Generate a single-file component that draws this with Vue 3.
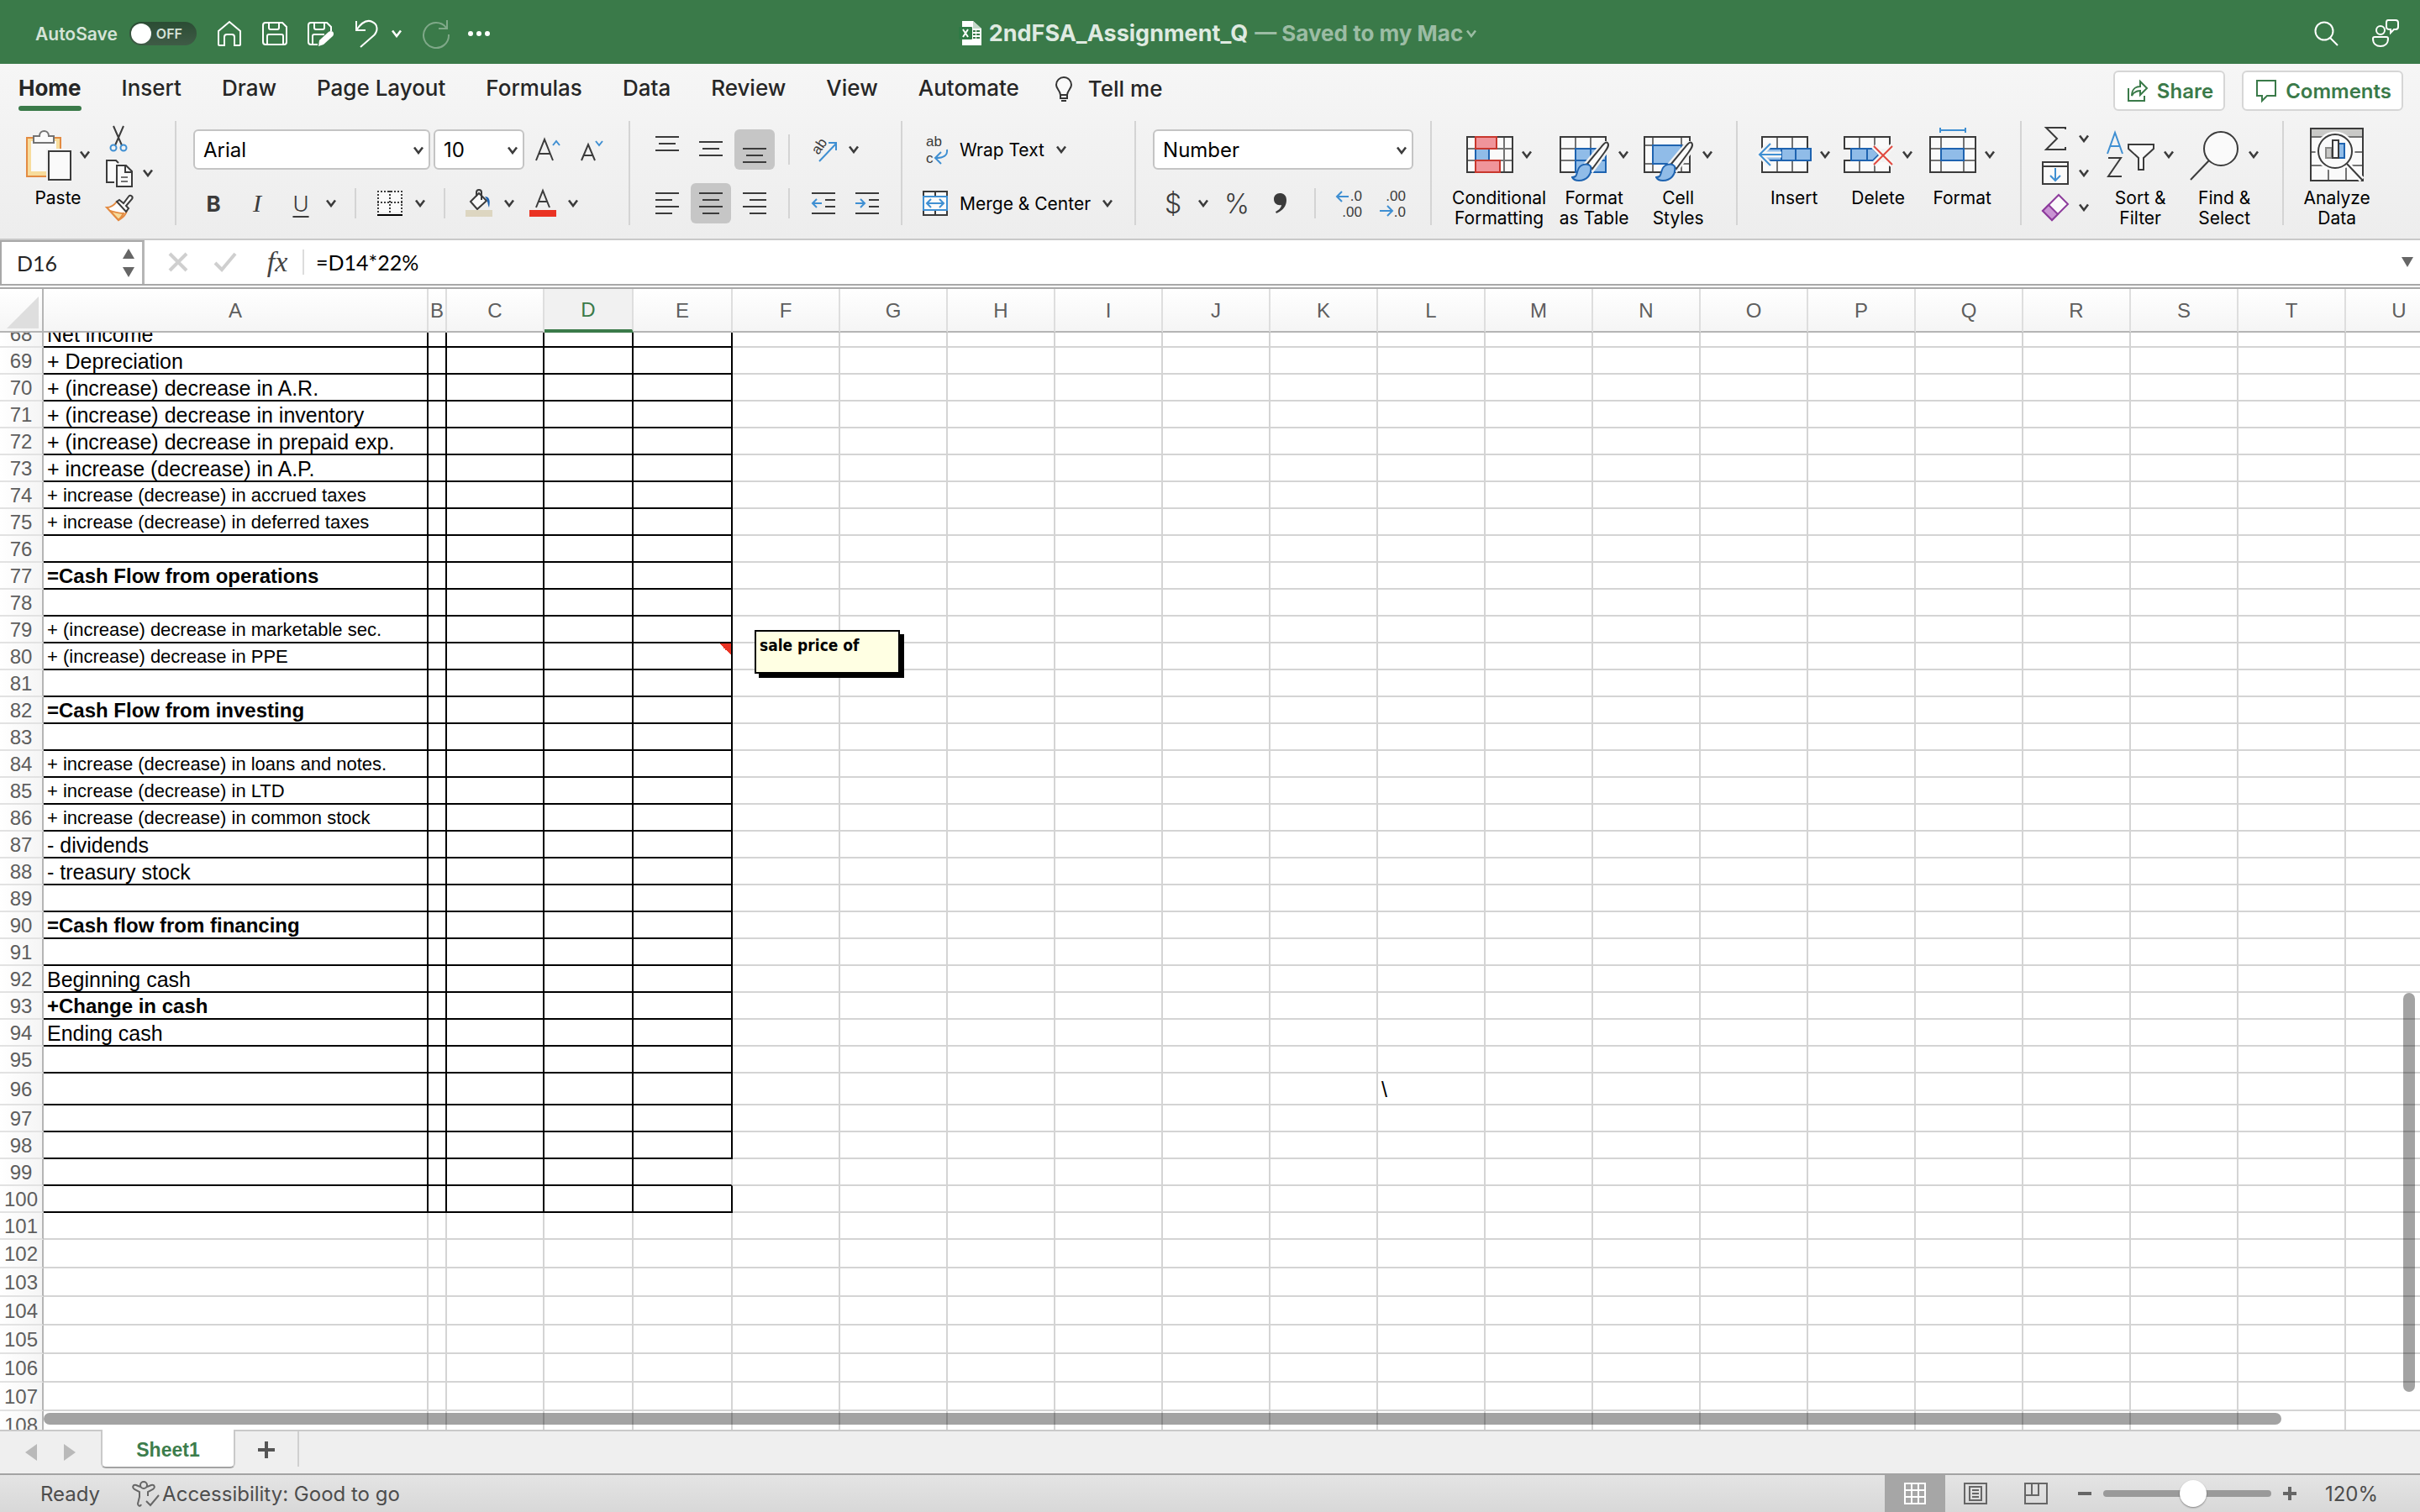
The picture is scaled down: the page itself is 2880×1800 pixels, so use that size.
<script setup>
import { ref, computed } from 'vue'

const fileName = ref('2ndFSA_Assignment_Q')
const autoSave = ref(false)
const activeTab = ref('Home')
const tabs = ['Home', 'Insert', 'Draw', 'Page Layout', 'Formulas', 'Data', 'Review', 'View', 'Automate']

const fontName = ref('Arial')
const fontSize = ref('10')
const numberFormat = ref('Number')
const nameBox = ref('D16')
const formula = ref('=D14*22%')
const zoom = ref(120)

// Column widths include the 2px grid line on the right
const columns = [
  { id: 'A', width: 458 },
  { id: 'B', width: 22 },
  { id: 'C', width: 116 },
  { id: 'D', width: 106 },
  { id: 'E', width: 118 },
  ...'FGHIJKLMNOPQRSTU'.split('').map((id) => ({ id, width: 128 }))
]

const labels = {
  68: { text: 'Net income' },
  69: { text: '+ Depreciation' },
  70: { text: '+ (increase) decrease in A.R.' },
  71: { text: '+ (increase) decrease in inventory' },
  72: { text: '+ (increase) decrease in prepaid exp.' },
  73: { text: '+ increase (decrease) in A.P.' },
  74: { text: '+ increase (decrease) in accrued taxes', small: true },
  75: { text: '+ increase (decrease) in deferred taxes', small: true },
  77: { text: '=Cash Flow from operations', bold: true },
  79: { text: '+ (increase) decrease in marketable sec.', small: true },
  80: { text: '+ (increase) decrease in PPE', small: true },
  82: { text: '=Cash Flow from investing', bold: true },
  84: { text: '+ increase (decrease) in loans and notes.', small: true },
  85: { text: '+ increase (decrease) in LTD', small: true },
  86: { text: '+ increase (decrease) in common stock', small: true },
  87: { text: '- dividends' },
  88: { text: '- treasury stock' },
  90: { text: '=Cash flow from financing', bold: true },
  92: { text: 'Beginning cash' },
  93: { text: '+Change in cash', bold: true },
  94: { text: 'Ending cash' }
}

const rowHeight = (n) => {
  if (n === 68) return 18 // partly scrolled under the header
  if (n === 96) return 38
  return n > 101 ? 34 : 32
}

const rows = computed(() => {
  const list = []
  for (let n = 68; n <= 108; n++) {
    list.push({ n, height: rowHeight(n), label: labels[n] || {} })
  }
  return list
})

const cellText = (row, col) => {
  if (col === 'A') return row.label.text
  if (col === 'L' && row.n === 96) return '\\'
  return ''
}

const cellClass = (row, col) => {
  const inked = row.n <= 100 && 'ABCDE'.includes(col)
  return {
    'ink-bottom': inked,
    'ink-right': inked && !(col === 'E' && row.n === 99),
    bold: col === 'A' && row.label.bold,
    small: col === 'A' && row.label.small,
    noted: col === 'E' && row.n === 80
  }
}
</script>

<template>
  <div class="app">
    <svg class="defs" aria-hidden="true">
      <symbol id="chev" viewBox="0 0 12 10">
        <path d="M1 1.5 6 8l5-6.5" fill="none" stroke="currentColor" stroke-width="2.6" />
      </symbol>
      <symbol id="brush" viewBox="0 0 46 50">
        <path d="M43 2c3 3-1 8-4 12L25 33l-6-6L34 9c3-4 7-9 9-7z" fill="#fafafa" stroke="#f2f2f2" stroke-width="7" />
        <path d="M43 2c3 3-1 8-4 12L25 33l-6-6L34 9c3-4 7-9 9-7z" fill="#fafafa" stroke="#3b3b3b" stroke-width="2" />
        <path d="M23 30c2 10-5 17-14 17-4 0-7-2-8-4 6 0 5-4 7-9 2-6 11-9 15-4z" fill="#90bce8" stroke="#1e63b0" stroke-width="2" />
      </symbol>
    </svg>

    <header class="titlebar">
      <div class="quick">
        <label class="autosave">
          <span class="autosave-text">AutoSave</span>
          <input v-model="autoSave" type="checkbox" />
          <span class="toggle"><i class="knob"></i>OFF</span>
        </label>
        <button type="button" aria-label="Home">
          <svg width="30" height="32" viewBox="0 0 30 32"><path d="M2 29V13L15 2l13 11v16a1 1 0 0 1-1 1h-6V20q0-3-3-3h-6q-3 0-3 3v10H3a1 1 0 0 1-1-1z" /></svg>
        </button>
        <button type="button" aria-label="Save">
          <svg width="30" height="32" viewBox="0 0 30 32"><path d="M4 3h20l5 5v18a3 3 0 0 1-3 3H4a3 3 0 0 1-3-3V6a3 3 0 0 1 3-3zM8 3v6q0 2 2 2h8q2 0 2-2V3M6 29V19q0-2 2-2h15q2 0 2 2v10" /></svg>
        </button>
        <button type="button" aria-label="Save as">
          <svg width="32" height="32" viewBox="0 0 32 32"><path d="M12 29H4a3 3 0 0 1-3-3V6a3 3 0 0 1 3-3h19l5 5v5M8 3v6q0 2 2 2h8q2 0 2-2V3M6 29V19q0-2 2-2h12" /><path d="m13 31 1-7 11-10c4-3 8 1 5 5L19 29z" fill="#fff" stroke="none" /></svg>
        </button>
        <span class="split-quick">
          <button type="button" aria-label="Undo">
            <svg width="30" height="34" viewBox="0 0 30 34"><path d="M2 2v11h11M2 13C8 4 15 0 21 3c7 3 7 11 2 16L7 33" /></svg>
          </button>
          <button type="button" aria-label="Undo history"><svg class="chev"><use href="#chev" /></svg></button>
        </span>
        <button type="button" class="dim" aria-label="Redo">
          <svg width="34" height="34" viewBox="0 0 34 34"><path d="M30 1v10H20M29 10A15 15 0 1 0 32 18" /></svg>
        </button>
        <button type="button" class="more" aria-label="More">
          <svg width="28" height="8" viewBox="0 0 28 8"><g fill="#fff" stroke="none"><circle cx="4" cy="4" r="3" /><circle cx="14" cy="4" r="3" /><circle cx="24" cy="4" r="3" /></g></svg>
        </button>
      </div>
      <h1 class="doc">
        <svg width="28" height="30" viewBox="0 0 28 30">
          <path d="M4 0h13l10 9v20H4z" fill="#fff" />
          <path d="M17 0v9h10z" fill="#c4d8c9" />
          <rect x="0" y="7" width="16" height="15" rx="1" fill="#2f7a45" />
          <path d="m5 10 6 9m0-9-6 9" stroke="#fff" stroke-width="2" fill="none" />
          <path d="M17 11h3v2h-3zm4 0h4v2h-4zm-4 4h3v2h-3zm4 0h4v2h-4zm-4 4h3v2h-3zm4 0h4v2h-4z" fill="#3a7a49" />
        </svg>
        <span class="doc-name">{{ fileName }}</span>
        <span class="doc-state">— Saved to my Mac <svg class="chev"><use href="#chev" /></svg></span>
      </h1>
      <div class="tools">
        <button type="button" aria-label="Search">
          <svg width="30" height="30" viewBox="0 0 30 30"><circle cx="12" cy="12" r="10.5" /><path d="m19 20 9 9" /></svg>
        </button>
        <button type="button" aria-label="Presence">
          <svg width="34" height="34" viewBox="0 0 34 34"><circle cx="11" cy="13" r="5" /><path d="M2 23q0-2 2-2h14q2 0 2 2c0 6-4 9-9 9s-9-3-9-9zM20 1h9q3 0 3 3v5q0 3-3 3h-2l-4 4v-4h-1q-4 0-4-3V4q0-3 2-3z" /></svg>
        </button>
      </div>
    </header>

    <section class="ribbon">
      <nav class="tabs">
        <button
          v-for="tab in tabs"
          :key="tab"
          type="button"
          class="tab"
          :class="{ active: tab === activeTab }"
          @click="activeTab = tab"
        >{{ tab }}</button>
        <button type="button" class="tab tell">
          <svg width="22" height="32" viewBox="0 0 22 32"><path d="M7 23c0-5-5-7-5-12a9 9 0 0 1 18 0c0 5-5 7-5 12zM7 23v4h8v-4" fill="#fafafa" stroke="#333" stroke-width="2" /><path d="M8 30h6" stroke="#333" stroke-width="2" /></svg>
          Tell me
        </button>
        <span class="spacer"></span>
        <button type="button" class="pill">
          <svg width="26" height="28" viewBox="0 0 26 28"><path d="M2 11v15h19v-6M6 20c0-7 4-11 10-11V3l8 8-8 8v-5c-5 0-8 2-10 6z" /></svg>
          Share
        </button>
        <button type="button" class="pill">
          <svg width="26" height="28" viewBox="0 0 26 28"><path d="M2 2h22v18H14l-6 6v-6H2z" /></svg>
          Comments
        </button>
      </nav>

      <div class="groups">
        <div class="group wide clipboard">
          <button type="button" class="big">
            <span class="pic">
              <svg width="54" height="64" viewBox="0 0 54 64">
                <path d="M1 12h40v46H1z" fill="#f7dc9c" stroke="#e38b42" stroke-width="2" />
                <path d="M6 16h30v36H6z" fill="#fafafa" />
                <path d="M9 10h7c0-8 11-8 11 0h6v8H9z" fill="#fafafa" stroke="#737373" stroke-width="2" />
                <path d="M24 25h30v39H24z" fill="#f2f2f2" />
                <path d="M27 28h26v34H27z" fill="#fafafa" stroke="#3b3b3b" stroke-width="2" />
              </svg>
              <svg class="chev"><use href="#chev" /></svg>
            </span>
            <span>Paste</span>
          </button>
          <div class="stack">
            <button type="button" aria-label="Cut">
              <svg width="32" height="34" viewBox="0 0 32 34"><path d="M9 2l10 23M21 2 11 25" stroke="#3b3b3b" stroke-width="2" fill="none" /><g fill="none" stroke="#3f8fd2" stroke-width="2"><circle cx="9" cy="28" r="3.5" /><circle cx="21" cy="28" r="3.5" /></g></svg>
            </button>
            <button type="button" aria-label="Copy">
              <svg width="32" height="34" viewBox="0 0 32 34"><g fill="#fafafa" stroke="#3b3b3b" stroke-width="2"><path d="M10 28H1V2h11l3 3" /><path d="M13 8h11l7 7v18H13z" /><path d="M23 8v8h8" fill="none" /><path d="M18 22h8M18 27h8" stroke="#737373" /></g></svg>
              <svg class="chev"><use href="#chev" /></svg>
            </button>
            <button type="button" aria-label="Format painter">
              <svg width="32" height="32" viewBox="0 0 32 32"><path d="M1 16c5 0 9-3 12-7l12 11c-2 6-6 9-10 11z" fill="#fff" stroke="#e38b42" stroke-width="2" /><path d="M5 20c4 1 10 3 16 3-2 4-4 6-6 8z" fill="#f7dc9c" stroke="#e38b42" stroke-width="2" /><path d="m13 9 3-2 5 4 6-8c2-3 6 0 4 3l-7 8 3 3-3 4z" fill="#fafafa" stroke="#3b3b3b" stroke-width="2" /></svg>
            </button>
          </div>
        </div>

        <div class="group lines">
          <div class="line">
            <span class="select font-name">
              <select v-model="fontName" aria-label="Font"><option>Arial</option><option>Calibri</option></select>
              <svg class="chev"><use href="#chev" /></svg>
            </span>
            <span class="select font-size">
              <select v-model="fontSize" aria-label="Font size"><option>9</option><option>10</option><option>12</option></select>
              <svg class="chev"><use href="#chev" /></svg>
            </span>
            <button type="button" class="ic" aria-label="Increase font size">
              <svg width="32" height="30" viewBox="0 0 32 30"><path d="M2 28 12 3l10 25M5 20h14" stroke="#3b3b3b" stroke-width="2" fill="none" /><path d="m22 10 4-5 4 5" stroke="#3f8fd2" stroke-width="2" fill="none" /></svg>
            </button>
            <button type="button" class="ic" aria-label="Decrease font size">
              <svg width="32" height="30" viewBox="0 0 32 30"><path d="M4 28 12 9l8 19M7 22h10" stroke="#3b3b3b" stroke-width="2" fill="none" /><path d="m21 5 4 5 4-5" stroke="#3f8fd2" stroke-width="2" fill="none" /></svg>
            </button>
          </div>
          <div class="line">
            <button type="button" class="ic glyph b">B</button>
            <button type="button" class="ic glyph i">I</button>
            <span class="split">
              <button type="button" class="ic glyph u">U</button>
              <button type="button" class="drop" aria-label="Underline style"><svg class="chev"><use href="#chev" /></svg></button>
            </span>
            <i class="sep"></i>
            <span class="split">
              <button type="button" class="ic" aria-label="Borders">
                <svg width="30" height="32" viewBox="0 0 30 32"><path d="M1 1h28v26H1z" fill="#fafafa" /><path d="M0 2h30M1 1v26M29 1v26M15 1v26M0 15h30" stroke="#3b3b3b" stroke-width="2" stroke-dasharray="2 2" fill="none" /><path d="M0 30h30" stroke="#000" stroke-width="2" /></svg>
              </button>
              <button type="button" class="drop" aria-label="Border style"><svg class="chev"><use href="#chev" /></svg></button>
            </span>
            <i class="sep"></i>
            <span class="split">
              <button type="button" class="ic" aria-label="Fill color">
                <svg width="32" height="34" viewBox="0 0 32 34"><path d="M6 15 16 5l9 9-11 10z" fill="#fafafa" stroke="#3b3b3b" stroke-width="2" /><path d="M13 9V4c0-4 6-4 6 0v9" fill="none" stroke="#3b3b3b" stroke-width="2" /><path d="M23 9c5 0 7 4 5 13-2-4-1-8-5-13z" fill="#1e63b0" /><path d="M0 25h32v8H0z" fill="#ddd6c1" /></svg>
              </button>
              <button type="button" class="drop" aria-label="Fill colors"><svg class="chev"><use href="#chev" /></svg></button>
            </span>
            <span class="split">
              <button type="button" class="ic" aria-label="Font color">
                <svg width="32" height="34" viewBox="0 0 32 34"><path d="m8 22 8-20 8 20M11 15h10" stroke="#3b3b3b" stroke-width="2" fill="none" /><path d="M0 25h32v8H0z" fill="#ea3323" /></svg>
              </button>
              <button type="button" class="drop" aria-label="Font colors"><svg class="chev"><use href="#chev" /></svg></button>
            </span>
          </div>
        </div>

        <div class="group lines align">
          <div class="line">
            <button type="button" class="ic" aria-label="Top align">
              <svg width="28" height="32" viewBox="0 0 28 32"><path d="M0 1h28M4 9h20M0 17h28" class="bar" /></svg>
            </button>
            <button type="button" class="ic" aria-label="Middle align">
              <svg width="28" height="32" viewBox="0 0 28 32"><path d="M0 7h28M4 15h20M0 23h28" class="bar" /></svg>
            </button>
            <button type="button" class="ic on" aria-label="Bottom align">
              <svg width="28" height="32" viewBox="0 0 28 32"><path d="M0 15h28M4 23h20M0 31h28" class="bar" /></svg>
            </button>
            <i class="sep"></i>
            <span class="split">
              <button type="button" class="ic" aria-label="Orientation">
                <svg width="34" height="34" viewBox="0 0 34 34"><text x="0" y="0" transform="translate(11 24) rotate(-55)" class="mini">ab</text><path d="m12 31 20-21M23 9h9v9" stroke="#3f8fd2" stroke-width="2" fill="none" /></svg>
              </button>
              <button type="button" class="drop" aria-label="Orientation options"><svg class="chev"><use href="#chev" /></svg></button>
            </span>
          </div>
          <div class="line">
            <button type="button" class="ic" aria-label="Align left">
              <svg width="28" height="28" viewBox="0 0 28 28"><path d="M0 2h28M0 10h20M0 18h28M0 26h20" class="bar" /></svg>
            </button>
            <button type="button" class="ic on" aria-label="Center">
              <svg width="28" height="28" viewBox="0 0 28 28"><path d="M0 2h28M4 10h20M0 18h28M4 26h20" class="bar" /></svg>
            </button>
            <button type="button" class="ic" aria-label="Align right">
              <svg width="28" height="28" viewBox="0 0 28 28"><path d="M0 2h28M8 10h20M0 18h28M8 26h20" class="bar" /></svg>
            </button>
            <i class="sep"></i>
            <button type="button" class="ic" aria-label="Decrease indent">
              <svg width="28" height="28" viewBox="0 0 28 28"><path d="M0 2h28M16 10h12M16 18h12M0 26h28" class="bar" /><path d="M12 14H1m5-5-5 5 5 5" stroke="#3f8fd2" stroke-width="2" fill="none" /></svg>
            </button>
            <button type="button" class="ic" aria-label="Increase indent">
              <svg width="28" height="28" viewBox="0 0 28 28"><path d="M0 2h28M16 10h12M16 18h12M0 26h28" class="bar" /><path d="M0 14h11m-5-5 5 5-5 5" stroke="#3f8fd2" stroke-width="2" fill="none" /></svg>
            </button>
          </div>
        </div>

        <div class="group lines wraps">
          <div class="line">
            <button type="button" class="labelled">
              <svg width="30" height="36" viewBox="0 0 30 36"><text x="4" y="14" class="mini">ab</text><text x="4" y="34" class="mini">c</text><path d="M29 18c1 7-4 10-13 10m6-7-7 7 7 7" stroke="#3f8fd2" stroke-width="2" fill="none" /></svg>
              Wrap Text
              <svg class="chev"><use href="#chev" /></svg>
            </button>
          </div>
          <div class="line">
            <button type="button" class="labelled">
              <svg width="30" height="32" viewBox="0 0 30 32"><path d="M1 2h28v28H1z" fill="#fafafa" stroke="#3b3b3b" stroke-width="2" /><path d="M15 2v6M15 24v6" stroke="#3b3b3b" stroke-width="2" /><path d="M1 8h28v16H1z" fill="#fafafa" stroke="#3f8fd2" stroke-width="2" /><path d="M6 16h18m-14-5-5 5 5 5m10-10 5 5-5 5" fill="none" stroke="#3f8fd2" stroke-width="2" /></svg>
              Merge &amp; Center
              <svg class="chev"><use href="#chev" /></svg>
            </button>
          </div>
        </div>

        <div class="group lines">
          <div class="line">
            <span class="select number">
              <select v-model="numberFormat" aria-label="Number format"><option>Number</option><option>General</option></select>
              <svg class="chev"><use href="#chev" /></svg>
            </span>
          </div>
          <div class="line">
            <span class="split">
              <button type="button" class="ic glyph sign">$</button>
              <button type="button" class="drop" aria-label="Currency"><svg class="chev"><use href="#chev" /></svg></button>
            </span>
            <button type="button" class="ic glyph sign">%</button>
            <button type="button" class="ic" aria-label="Comma style">
              <svg width="16" height="28" viewBox="0 0 16 28"><path d="M7 2c5 0 8 3 8 8 0 8-5 13-12 16l-1-2c4-2 7-5 7-8-5 1-9-2-9-7 0-4 3-7 7-7z" fill="#3b3b3b" /></svg>
            </button>
            <i class="sep"></i>
            <button type="button" class="ic" aria-label="Increase decimal">
              <svg width="32" height="36" viewBox="0 0 32 36"><text x="31" y="15" text-anchor="end" class="mini">.0</text><text x="31" y="34" text-anchor="end" class="mini">.00</text><path d="M15 10H1m6-6-6 6 6 6" stroke="#3f8fd2" stroke-width="2" fill="none" /></svg>
            </button>
            <button type="button" class="ic" aria-label="Decrease decimal">
              <svg width="32" height="36" viewBox="0 0 32 36"><text x="31" y="15" text-anchor="end" class="mini">.00</text><text x="31" y="34" text-anchor="end" class="mini">.0</text><path d="M0 27h15m-6-6 6 6-6 6" stroke="#3f8fd2" stroke-width="2" fill="none" /></svg>
            </button>
          </div>
        </div>

        <div class="group wide">
          <button type="button" class="big">
            <span class="pic">
              <svg width="56" height="64" viewBox="0 0 56 64">
                <path d="M1 11h54v42H1z" fill="#fafafa" />
                <path d="M1 25h54M1 39h54M45 11v42M11 11v42" stroke="#737373" stroke-width="2" />
                <path d="M1 11h54v42H1z" fill="none" stroke="#3b3b3b" stroke-width="2" />
                <path d="M29 26h15v12H29z" fill="#fafafa" />
                <path d="M11 25h16v14H11z" fill="#90bce8" stroke="#1e63b0" stroke-width="2" />
                <path d="M11 11h25v14H11zM11 39h29v14H11z" fill="#f0949a" stroke="#c8372d" stroke-width="2" />
              </svg>
              <svg class="chev"><use href="#chev" /></svg>
            </span>
            <span>Conditional<br />Formatting</span>
          </button>
          <button type="button" class="big">
            <span class="pic">
              <svg width="60" height="64" viewBox="0 0 60 64">
                <path d="M1 11h54v42H1z" fill="#fafafa" stroke="#3b3b3b" stroke-width="2" />
                <path d="M2 25h17M2 39h17M19 12v13M37 12v13" stroke="#737373" stroke-width="2" />
                <path d="M19 25h36v28H19zM37 25v28M19 39h36" fill="#90bce8" stroke="#1e63b0" stroke-width="2" />
                <use href="#brush" x="14" y="16" width="46" height="50" />
              </svg>
              <svg class="chev"><use href="#chev" /></svg>
            </span>
            <span>Format<br />as Table</span>
          </button>
          <button type="button" class="big">
            <span class="pic">
              <svg width="60" height="64" viewBox="0 0 60 64">
                <path d="M1 11h54v42H1z" fill="#fafafa" stroke="#3b3b3b" stroke-width="2" />
                <path d="M2 21h52M2 43h52M11 12v40M45 12v40" stroke="#737373" stroke-width="2" />
                <path d="M11 21h34v22H11z" fill="#90bce8" stroke="#1e63b0" stroke-width="2" />
                <use href="#brush" x="14" y="16" width="46" height="50" />
              </svg>
              <svg class="chev"><use href="#chev" /></svg>
            </span>
            <span>Cell<br />Styles</span>
          </button>
        </div>

        <div class="group wide">
          <button type="button" class="big">
            <span class="pic">
              <svg width="64" height="64" viewBox="0 0 64 64">
                <path d="M5 11h54v42H5z" fill="#fafafa" stroke="#3b3b3b" stroke-width="2" />
                <path d="M23 12v40M41 12v40" stroke="#737373" stroke-width="2" />
                <path d="M10 25h53v14H10zM28 25v14M45 25v14" fill="#90bce8" stroke="#1e63b0" stroke-width="2" />
                <path d="M28 32H3m12-13L2 32l13 13" fill="none" stroke="#f5f5f5" stroke-width="7" />
                <path d="M28 32H2m13-13L2 32l13 13" fill="none" stroke="#3f8fd2" stroke-width="2" />
              </svg>
              <svg class="chev"><use href="#chev" /></svg>
            </span>
            <span>Insert</span>
          </button>
          <button type="button" class="big">
            <span class="pic">
              <svg width="60" height="64" viewBox="0 0 60 64">
                <path d="M9 25H1V11h54v14M9 39H1v14h54V41" fill="#fafafa" stroke="#3b3b3b" stroke-width="2" />
                <path d="M19 12v13M37 12v13M19 39v13M37 39v13" stroke="#737373" stroke-width="2" />
                <path d="M9 25h26l7 7-7 7H9zM28 25v14" fill="#90bce8" stroke="#1e63b0" stroke-width="2" />
                <path d="m36 22 22 22M58 22 36 44" fill="none" stroke="#f5f5f5" stroke-width="7" />
                <path d="m36 22 22 22M58 22 36 44" fill="none" stroke="#e0483e" stroke-width="2" />
              </svg>
              <svg class="chev"><use href="#chev" /></svg>
            </span>
            <span>Delete</span>
          </button>
          <button type="button" class="big">
            <span class="pic">
              <svg width="56" height="64" viewBox="0 0 56 64">
                <path d="M1 11h54v42H1z" fill="#fafafa" />
                <path d="M1 25h54M1 39h54M14 11v42M41 11v42" stroke="#737373" stroke-width="2" />
                <path d="M1 11h54v42H1z" fill="none" stroke="#3b3b3b" stroke-width="2" />
                <path d="M14 25h27v14H14z" fill="#90bce8" stroke="#1e63b0" stroke-width="2" />
                <path d="M13 3h30M13 0v6M43 0v6" stroke="#3f8fd2" stroke-width="2" />
              </svg>
              <svg class="chev"><use href="#chev" /></svg>
            </span>
            <span>Format</span>
          </button>
        </div>

        <div class="group wide">
          <div class="stack">
            <button type="button" aria-label="AutoSum">
              <svg width="32" height="30" viewBox="0 0 32 30"><path d="M28 4V2H5l13 13L5 28h23v-3" fill="none" stroke="#3b3b3b" stroke-width="2" /></svg>
              <svg class="chev"><use href="#chev" /></svg>
            </button>
            <button type="button" aria-label="Fill">
              <svg width="32" height="30" viewBox="0 0 32 30"><path d="M1 2h30v26H1zM1 7h30" fill="#fafafa" stroke="#3b3b3b" stroke-width="2" /><path d="M16 9v15m-6-6 6 6 6-6" fill="none" stroke="#3f8fd2" stroke-width="2" /></svg>
              <svg class="chev"><use href="#chev" /></svg>
            </button>
            <button type="button" aria-label="Clear">
              <svg width="32" height="34" viewBox="0 0 32 34"><path d="M20 2 31 13 12 32 1 21z" fill="#fafafa" stroke="#8d3c9c" stroke-width="2" /><path d="m8 14 11 11-7 7L1 21z" fill="#c993d3" stroke="#8d3c9c" stroke-width="2" /></svg>
              <svg class="chev"><use href="#chev" /></svg>
            </button>
          </div>
          <button type="button" class="big">
            <span class="pic">
              <svg width="58" height="64" viewBox="0 0 58 64">
                <path d="m1 31 9-25 9 25M4 22h12" fill="none" stroke="#3f8fd2" stroke-width="2" />
                <path d="M2 36h15L2 58h16" fill="none" stroke="#3b3b3b" stroke-width="2" />
                <path d="M26 20h30v5L44 36v14h-6V36L26 25z" fill="#fafafa" stroke="#3b3b3b" stroke-width="2" />
              </svg>
              <svg class="chev"><use href="#chev" /></svg>
            </span>
            <span>Sort &amp;<br />Filter</span>
          </button>
          <button type="button" class="big">
            <span class="pic">
              <svg width="60" height="64" viewBox="0 0 60 64">
                <circle cx="37" cy="25" r="20" fill="#fafafa" stroke="#3b3b3b" stroke-width="2" />
                <path d="M23 39 1 62" stroke="#3b3b3b" stroke-width="2" />
              </svg>
              <svg class="chev"><use href="#chev" /></svg>
            </span>
            <span>Find &amp;<br />Select</span>
          </button>
        </div>

        <div class="group wide last">
          <button type="button" class="big">
            <span class="pic">
              <svg width="64" height="64" viewBox="0 0 64 64">
                <path d="M1 1h62v62H1z" fill="#fafafa" />
                <path d="M1 1h62v10H1z" fill="#c9c9c7" />
                <path d="M1 11h62M1 29h62M1 45h62M22 45v18M43 45v18" stroke="#737373" stroke-width="2" />
                <path d="M1 1h62v62H1z" fill="none" stroke="#3b3b3b" stroke-width="2" />
                <circle cx="30" cy="28" r="20" fill="#fafafa" stroke="#fafafa" stroke-width="7" />
                <path d="m44 43 18 19" stroke="#fafafa" stroke-width="7" />
                <path d="M19 24h7v12h-7z" fill="#c9c9c7" stroke="#8a8a88" stroke-width="2" />
                <path d="M34 19h7v17h-7z" fill="#90bce8" stroke="#1e63b0" stroke-width="2" />
                <path d="M27 15h7v21h-7z" fill="#fafafa" stroke="#3b3b3b" stroke-width="2" />
                <circle cx="30" cy="28" r="20" fill="none" stroke="#3b3b3b" stroke-width="2" />
                <path d="m44 43 19 20" stroke="#3b3b3b" stroke-width="2" />
              </svg>
            </span>
            <span>Analyze<br />Data</span>
          </button>
        </div>
      </div>
    </section>

    <section class="formula-bar">
      <div class="name-box">
        <input v-model="nameBox" type="text" aria-label="Name box" />
        <span class="steps">
          <svg width="14" height="12" viewBox="0 0 14 12"><path d="M7 0l7 12H0z" /></svg>
          <svg width="14" height="12" viewBox="0 0 14 12"><path d="M7 12 0 0h14z" /></svg>
        </span>
      </div>
      <button type="button" aria-label="Cancel"><svg width="28" height="24" viewBox="0 0 28 24"><path d="m4 2 20 20M24 2 4 22" stroke="#cfcfcf" stroke-width="4" fill="none" /></svg></button>
      <button type="button" aria-label="Enter"><svg width="28" height="24" viewBox="0 0 28 24"><path d="m2 13 8 8L26 2" stroke="#cfcfcf" stroke-width="4" fill="none" /></svg></button>
      <button type="button" class="fx">fx</button>
      <input v-model="formula" class="formula" type="text" aria-label="Formula" />
      <svg class="expand" width="14" height="12" viewBox="0 0 14 12"><path d="M7 12 0 0h14z" /></svg>
    </section>

    <main class="sheet">
      <table>
        <colgroup>
          <col class="row-col" />
          <col v-for="col in columns" :key="col.id" :style="{ width: col.width + 'px' }" />
        </colgroup>
        <thead>
          <tr>
            <th class="corner"><svg width="38" height="38" viewBox="0 0 38 38"><path d="M38 0v38H0z" fill="#dedede" /></svg></th>
            <th v-for="col in columns" :key="col.id" :class="{ current: col.id === 'D' }">{{ col.id }}</th>
          </tr>
        </thead>
        <tbody>
          <tr v-for="row in rows" :key="row.n" :style="{ height: row.height + 'px' }">
            <th><div class="clip" :style="{ height: row.height - 2 + 'px' }"><span>{{ row.n }}</span></div></th>
            <td v-for="col in columns" :key="col.id" :class="cellClass(row, col.id)">
              <div v-if="cellText(row, col.id)" class="clip" :style="{ height: row.height - 2 + 'px' }"><span>{{ cellText(row, col.id) }}</span></div>
              <aside v-if="col.id === 'E' && row.n === 80" class="note">sale price of</aside>
            </td>
          </tr>
        </tbody>
      </table>
      <div class="scroll-x"></div>
      <div class="scroll-y"></div>
    </main>

    <nav class="sheet-tabs">
      <button type="button" aria-label="Previous sheet"><svg width="14" height="20" viewBox="0 0 14 20"><path d="M14 0v20L0 10z" fill="#b9b9b9" /></svg></button>
      <button type="button" aria-label="Next sheet"><svg width="14" height="20" viewBox="0 0 14 20"><path d="M0 0v20l14-10z" fill="#b9b9b9" /></svg></button>
      <button type="button" class="sheet-tab">Sheet1</button>
      <button type="button" class="add" aria-label="Add sheet"><svg width="20" height="20" viewBox="0 0 20 20"><path d="M10 0v20M0 10h20" stroke="#555" stroke-width="4" /></svg></button>
    </nav>

    <footer class="status">
      <span class="ready">Ready</span>
      <button type="button" class="access">
        <svg width="34" height="32" viewBox="0 0 34 32"><g fill="none" stroke="#666" stroke-width="2"><circle cx="14" cy="6" r="4" /><path d="M10 8 5 6C1 5 0 9 3 11l6 3v6L7 28c0 3 3 4 4 1M18 8l5-2c4-1 5 3 2 5l-6 3v5M17 25l5 5 10-12" /></g></svg>
        Accessibility: Good to go
      </button>
      <span class="spacer"></span>
      <button type="button" class="view on" aria-label="Normal view">
        <svg width="28" height="28" viewBox="0 0 28 28"><path d="M2 2h24v24H2zM10 2v24M18 2v24M2 10h24M2 18h24" fill="none" stroke="#fff" stroke-width="2" /></svg>
      </button>
      <button type="button" class="view" aria-label="Page layout view">
        <svg width="28" height="28" viewBox="0 0 28 28"><path d="M1 2h26v24H1zM7 6h14v16H7zM10 10h8M10 14h8M10 18h8" fill="none" stroke="#666" stroke-width="2" /></svg>
      </button>
      <button type="button" class="view" aria-label="Page break preview">
        <svg width="28" height="28" viewBox="0 0 28 28"><path d="M1 2h26v24H1zM1 16h16V2M9 2v14" fill="none" stroke="#666" stroke-width="2" /></svg>
      </button>
      <button type="button" class="step" aria-label="Zoom out" @click="zoom -= 10"><svg width="16" height="16" viewBox="0 0 16 16"><path d="M0 8h16" stroke="#666" stroke-width="4" /></svg></button>
      <input v-model.number="zoom" type="range" min="12" max="212" aria-label="Zoom" />
      <button type="button" class="step" aria-label="Zoom in" @click="zoom += 10"><svg width="16" height="16" viewBox="0 0 16 16"><path d="M0 8h16M8 0v16" stroke="#666" stroke-width="4" /></svg></button>
      <span class="percent">{{ zoom }}%</span>
    </footer>
  </div>
</template>

<style>
body {
  margin: 0;
  overflow: hidden;
}
</style>

<style scoped>
.app {
  display: flex;
  flex-direction: column;
  height: 100vh;
  overflow: hidden;
  background: #fff;
  color: #262626;
  font-family: Inter, "Liberation Sans", sans-serif;
  font-size: 24px;
}
.app *,
.app *::after {
  box-sizing: border-box;
}
svg {
  flex: none;
  display: block;
  overflow: visible;
}
.defs {
  position: absolute;
  width: 0;
  height: 0;
}
.chev {
  width: 12px;
  height: 10px;
  color: #3b3b3b;
}
button {
  display: flex;
  align-items: center;
  justify-content: center;
  padding: 0;
  border: 0;
  background: none;
  color: inherit;
  font: inherit;
  white-space: nowrap;
}
input {
  font: inherit;
  color: inherit;
}
.spacer {
  flex: 1;
}

/* title bar */
.titlebar {
  flex: none;
  display: grid;
  grid-template-columns: 1fr auto 1fr;
  align-items: center;
  height: 76px;
  padding: 4px 24px 0 42px;
  background: #3a7a49;
  color: #fff;
}
.quick,
.tools {
  display: flex;
  align-items: center;
  gap: 24px;
}
.quick svg,
.tools svg {
  fill: none;
  stroke: #fff;
  stroke-width: 2;
}
.quick .chev,
.titlebar .chev {
  color: #fff;
  stroke: none;
}
.tools {
  justify-content: flex-end;
  gap: 38px;
}
.autosave {
  display: flex;
  align-items: center;
  gap: 14px;
}
.autosave-text {
  color: #d5e3d8;
  font-size: 21px;
  font-weight: 600;
}
.autosave input {
  position: absolute;
  opacity: 0;
}
.toggle {
  display: flex;
  align-items: center;
  gap: 6px;
  width: 80px;
  height: 28px;
  padding: 0 2px;
  border-radius: 14px;
  background: linear-gradient(#2b4c34, #3f5b46);
  color: #d5e3d8;
  font-size: 16px;
  font-weight: 600;
}
.knob {
  width: 24px;
  height: 24px;
  border-radius: 50%;
  background: #fff;
}
.split-quick {
  display: flex;
  gap: 14px;
}
.dim {
  opacity: 0.35;
}
.more {
  margin-left: -4px;
}
.doc {
  display: flex;
  align-items: center;
  gap: 8px;
  margin: 0;
  font-size: 26px;
  line-height: 32px;
  font-weight: 700;
}
.doc-name {
  color: #dfeae1;
  font-size: 27px;
}
.doc-state {
  display: flex;
  align-items: center;
  gap: 4px;
  color: #9cbca4;
}
.doc-state .chev {
  color: #9cbca4;
}

/* ribbon */
.ribbon {
  flex: none;
  border-bottom: 2px solid #c9c9c9;
  background: linear-gradient(#f6f6f6, #ededed);
}
.tabs {
  display: flex;
  align-items: flex-start;
  gap: 48px;
  height: 68px;
  padding: 0 20px 0 22px;
}
.tab {
  flex-direction: column;
  padding-top: 14px;
  font-size: 26px;
  font-weight: 500;
  line-height: 30px;
}
.tab.active {
  font-weight: 700;
}
.tab.active::after {
  content: "";
  width: 100%;
  height: 6px;
  margin-top: 6px;
  border-radius: 3px;
  background: #3a7a49;
}
.tell {
  flex-direction: row;
  gap: 18px;
  margin-left: -6px;
}
.pill {
  height: 48px;
  margin-top: 8px;
  padding: 0 12px 0 14px;
  gap: 10px;
  border: 2px solid #d6d6d6;
  border-radius: 6px;
  background: #fff;
  color: #3a7a49;
  font-weight: 600;
}
.pill + .pill {
  margin-left: -28px;
}
.pill svg {
  fill: none;
  stroke: #3a7a49;
  stroke-width: 2;
}
.groups {
  display: flex;
  height: 140px;
  padding-bottom: 16px;
}
.group {
  flex: none;
  display: flex;
  border-right: 2px solid #d4d4d4;
}
.group.wide {
  gap: 14px;
  padding: 0 26px 0 24px;
}
.group.clipboard {
  padding: 0 22px 0 26px;
}
.group.last {
  padding-left: 20px;
  border-right: 0;
}
.group.lines {
  flex-direction: column;
  gap: 16px;
  padding: 10px 20px 0;
}
.group.align {
  padding-right: 16px;
}
.group.wraps {
  padding-right: 26px;
}
.line {
  display: flex;
  align-items: center;
  gap: 4px;
  height: 48px;
}
.big {
  flex-direction: column;
  align-self: flex-start;
  min-width: 86px;
  color: #000;
  font-size: 21px;
  line-height: 24px;
}
.pic {
  display: flex;
  align-items: center;
  gap: 10px;
  height: 80px;
}
.stack {
  display: flex;
  flex-direction: column;
  width: 60px;
}
.stack button {
  justify-content: flex-start;
  gap: 12px;
  height: 44px;
}
.select {
  position: relative;
}
.select select {
  appearance: none;
  display: block;
  width: 100%;
  height: 48px;
  padding: 0 10px;
  border: 2px solid #c4c4c4;
  border-radius: 6px;
  background: #fff;
  color: #000;
  font: inherit;
}
.select .chev {
  position: absolute;
  right: 8px;
  top: 20px;
  pointer-events: none;
}
.font-name {
  width: 282px;
}
.font-size {
  width: 108px;
}
.number {
  width: 310px;
}
.ic {
  width: 48px;
  height: 48px;
  border-radius: 6px;
  color: #3b3b3b;
}
.ic.on {
  background: #c6c6c6;
}
.split {
  display: flex;
}
.drop {
  width: 24px;
}
.sep {
  width: 2px;
  height: 36px;
  margin: 0 12px;
  background: #d4d4d4;
}
.glyph {
  font-size: 26px;
}
.b {
  font-weight: 700;
}
.i {
  font-family: "Liberation Serif", serif;
  font-size: 30px;
  font-style: italic;
}
.u {
  text-decoration: underline;
  text-underline-offset: 5px;
  font-weight: 300;
}
.sign {
  font-size: 32px;
  font-weight: 300;
}
.bar {
  stroke: #3b3b3b;
  stroke-width: 2;
}
.mini {
  font-family: "Liberation Sans", sans-serif;
  font-size: 17px;
  fill: #3b3b3b;
}
.labelled {
  gap: 14px;
  padding-left: 4px;
  color: #000;
  font-size: 21px;
}

/* formula bar */
.formula-bar {
  flex: none;
  display: flex;
  align-items: center;
  height: 58px;
  padding-right: 8px;
  border-bottom: 6px double #a8a8a8;
  background: #fff;
  font-family: Lato, sans-serif;
  font-size: 25px;
}
.formula-bar button {
  width: 56px;
}
.formula-bar button:nth-of-type(1) {
  margin-left: 12px;
}
.name-box {
  display: flex;
  align-items: center;
  width: 172px;
  height: 100%;
  border-top: 2px solid #a8a8a8;
  border-left: 2px solid #a8a8a8;
  border-right: 3px solid #b5b5b5;
}
.name-box input {
  width: 144px;
  padding: 0 0 0 18px;
  border: 0;
}
.steps {
  display: flex;
  flex-direction: column;
  gap: 10px;
}
.steps svg,
.expand {
  fill: #666;
}
.formula-bar .fx {
  width: 64px;
  padding-left: 4px;
  color: #444;
  font-family: "Liberation Serif", serif;
  font-size: 34px;
  font-style: italic;
}
.formula {
  flex: 1;
  height: 30px;
  padding: 0 0 0 14px;
  border: 0;
  border-left: 2px solid #dcdcdc;
  color: #000;
}

/* grid */
.sheet {
  position: relative;
  flex: 1;
  min-height: 0;
  overflow: hidden;
  font-family: "Liberation Sans", sans-serif;
}
table {
  width: 100%;
  min-width: max-content;
  table-layout: fixed;
  border-collapse: separate;
  border-spacing: 0;
}
.row-col {
  width: 52px;
}
th,
td {
  padding: 0;
  border-right: 2px solid #d4d4d4;
  border-bottom: 2px solid #d4d4d4;
}
th {
  color: #5e5e5e;
  font-weight: 400;
}
td {
  font-size: 25px;
}
thead th {
  height: 52px;
  padding-top: 2px;
  border-color: #dedede;
  border-bottom-color: #b5b5b5;
  background: linear-gradient(#fff, #f5f5f5);
}
thead th.current {
  border-bottom: 4px solid #3a7a49;
  background: #f1f1f1;
  color: #3a7a49;
}
thead th.corner,
tbody th {
  border-right-color: #b5b5b5;
}
.corner svg {
  margin: 4px 0 0 8px;
}
tbody th {
  background: linear-gradient(90deg, #fff, #f5f5f5);
  border-bottom-color: #e2e2e2;
}
.clip {
  display: flex;
  align-items: center;
  overflow: hidden;
  padding-top: 2px;
  line-height: 28px;
  white-space: nowrap;
}
tbody th .clip {
  justify-content: center;
}
tbody tr:first-child .clip {
  align-items: flex-end;
}
td .clip {
  padding-left: 4px;
  color: #000;
}
.small {
  font-size: 22px;
}
.bold {
  font-size: 24px;
  font-weight: 700;
}
.ink-right {
  border-right-color: #000;
}
.ink-bottom {
  border-bottom-color: #000;
}
.noted {
  position: relative;
  background: linear-gradient(45deg, transparent 50%, #ea3323 50%) top right / 14px 14px no-repeat;
}
.note {
  position: absolute;
  left: calc(100% + 28px);
  top: -16px;
  z-index: 1;
  width: 173px;
  height: 52px;
  padding: 4px;
  border: 2px solid #000;
  background: #ffffe3;
  box-shadow: 5px 5px 0 #000;
  color: #000;
  font: 700 19px/24px "DejaVu Sans Condensed", "Noto Sans", sans-serif;
  white-space: nowrap;
}
.scroll-x,
.scroll-y {
  position: absolute;
  border-radius: 7px;
  background: rgba(0, 0, 0, 0.36);
}
.scroll-x {
  left: 52px;
  right: 165px;
  bottom: 6px;
  height: 14px;
}
.scroll-y {
  right: 6px;
  bottom: 45px;
  width: 14px;
  height: 35%;
}

/* sheet tabs */
.sheet-tabs {
  flex: none;
  display: flex;
  align-items: flex-start;
  height: 54px;
  border-top: 2px solid #c9c9c9;
  border-bottom: 2px solid #a3a3a3;
  background: #efefef;
}
.sheet-tabs button {
  width: 46px;
  height: 50px;
}
.sheet-tabs button:first-child {
  margin-left: 14px;
}
.sheet-tabs .sheet-tab {
  width: 160px;
  height: 46px;
  margin: -2px 0 0 14px;
  padding-top: 4px;
  border: 2px solid #c9c9c9;
  border-top: 0;
  border-bottom-color: #a3a3a3;
  border-radius: 0 0 6px 6px;
  background: #fff;
  color: #3c7d4c;
  font: 700 23px "Liberation Sans", sans-serif;
}
.sheet-tabs .add {
  width: 76px;
  height: 42px;
  border-right: 2px solid #d0d0d0;
  padding-top: 2px;
}

/* status bar */
.status {
  flex: none;
  display: flex;
  align-items: center;
  height: 44px;
  padding: 0 50px 0 48px;
  background: linear-gradient(#e4e4e4, #d8d8d8);
  color: #4d4d4d;
}
.access {
  gap: 2px;
  margin-left: 38px;
}
.view {
  width: 72px;
  height: 44px;
}
.view.on {
  background: #a6a6a6;
}
.step {
  width: 44px;
  height: 44px;
}
.status input {
  appearance: none;
  width: 200px;
  height: 32px;
  margin: 0;
  background: none;
}
.status input::-webkit-slider-runnable-track {
  height: 8px;
  border-radius: 4px;
  background: #9a9a9a;
}
.status input::-webkit-slider-thumb {
  appearance: none;
  width: 32px;
  height: 32px;
  margin-top: -12px;
  border-radius: 50%;
  background: #fff;
  box-shadow: 0 1px 2px rgba(0, 0, 0, 0.4);
}
.percent {
  margin-left: 20px;
}
</style>
